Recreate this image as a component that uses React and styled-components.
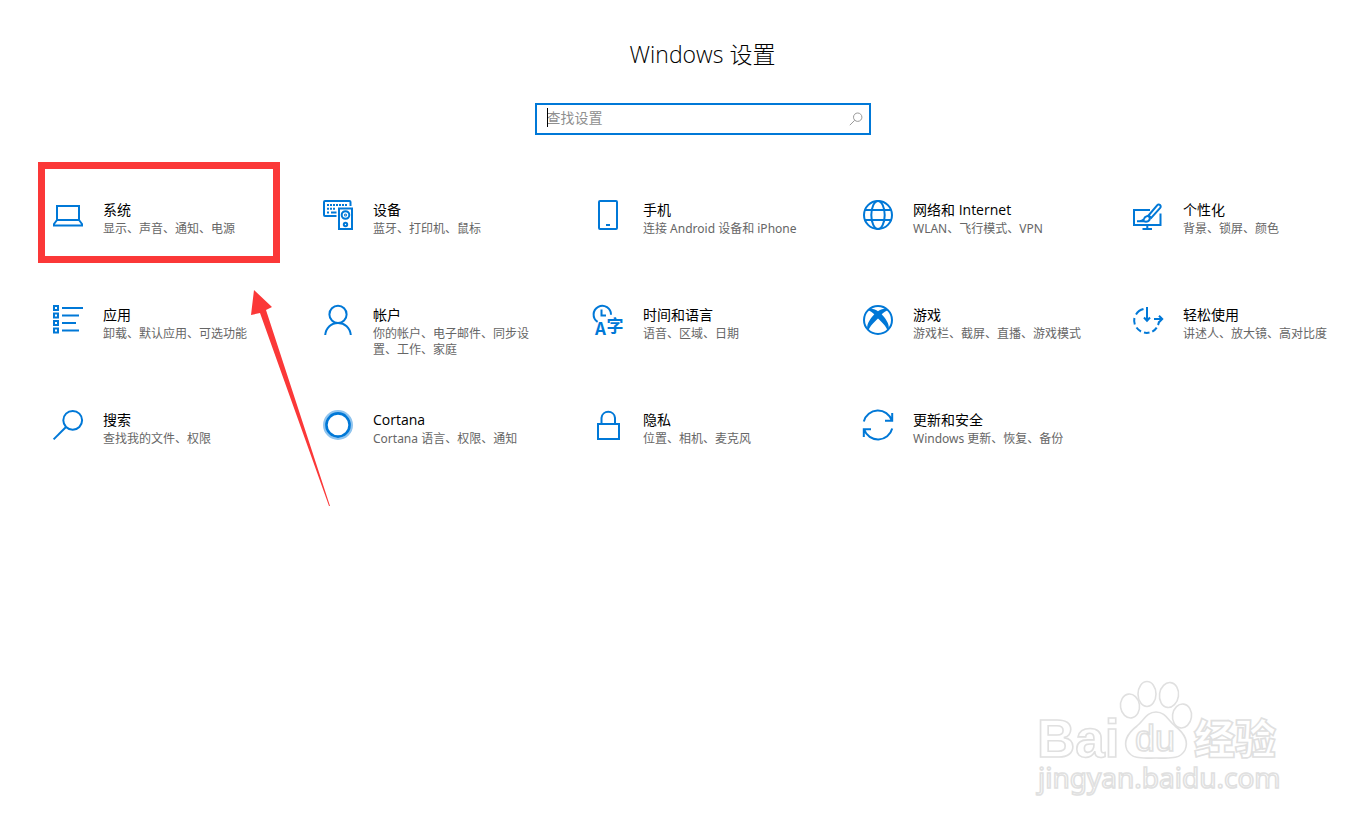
import React from "react";
import styled, { createGlobalStyle } from "styled-components";

const BLUE = "#0078d7";
const RED = "#fb3838";

const IconText = styled.text`
  fill: ${BLUE};
  stroke: none;
  font-family: "Noto Sans CJK SC", sans-serif;
  font-size: ${({ $size }) => $size}px;
  font-weight: 700;
`;

const icons = {
  system: (
    <>
      <rect x="4" y="6" width="22" height="14" />
      <path d="M4 20L1 24V25.5H29V24L26 20" />
    </>
  ),
  devices: (
    <>
      <path d="M13.5 16H2A1 1 0 0 1 1 15V2A1 1 0 0 1 2 1H26.5A1 1 0 0 1 27.5 2V6" />
      <path d="M4 5H25M4 8.7H13" strokeDasharray="2 1" />
      <path d="M4 12.4H6M8 12.4H13.5" />
      <rect x="16" y="8.5" width="13" height="20.5" />
      <circle cx="22.5" cy="15" r="3.8" />
      <circle cx="22.5" cy="15" r="0.5" />
      <circle cx="22.5" cy="24.5" r="1.7" />
    </>
  ),
  phone: (
    <>
      <rect x="6" y="1" width="18" height="28" rx="1" />
      <path d="M13 25H17" />
    </>
  ),
  network: (
    <>
      <circle cx="15" cy="15" r="14" />
      <ellipse cx="15" cy="15" rx="6.7" ry="14" />
      <path d="M2 10H28M2 20H28" />
    </>
  ),
  personalization: (
    <>
      <path d="M17 10H1V25H27.5V13.5" />
      <path d="M14.3 25V29M9.5 29H19" />
      <path d="M15.5 15.5L24.3 5.2A1.9 1.9 0 0 1 27.2 7.8L18.2 17.8Z" />
      <path d="M4 21.3C8 21.2 10.5 20.5 11.3 18.3C12 15.8 15.6 15.3 16.7 17.6C17.5 20.8 14 22.3 11 21.3Z" />
    </>
  ),
  apps: (
    <>
      <path d="M1 1H5V5H1ZM1 8.5H5V12.5H1ZM1 16H5V20H1ZM1 23.5H5V27.5H1Z" />
      <path d="M9 3H30M9 10.5H26M9 18H23M9 25.5H26" />
    </>
  ),
  accounts: (
    <>
      <circle cx="15" cy="9.4" r="8.6" />
      <path d="M2.2 30C3 22.6 8.2 18 15 18S27 22.6 27.8 30" />
    </>
  ),
  language: (
    <>
      <path d="M4.6 16.8A8.7 8.7 0 1 1 18 9.8" />
      <path d="M8.5 4.5V10.4H13" />
      <IconText x="2" y="30" $size={17}>A</IconText>
      <IconText x="13.5" y="26.5" $size={17}>字</IconText>
    </>
  ),
  gaming: (
    <>
      <circle cx="15" cy="15" r="14" />
      <path
        d="M6 4.2C9 3.2 12.5 4.5 15 6.3C17.5 4.5 21 3.2 24 4.2L25.5 5.5C23.5 5.3 20.5 7.5 18.7 9.3C22 13 26.5 18.5 25.8 24L24.5 25.8C23.5 21.5 18.5 16.8 15 13.6C11.5 16.8 6.5 21.5 5.5 25.8L4.2 24C3.5 18.5 8 13 11.3 9.3C9.5 7.5 6.5 5.3 4.5 5.5Z"
        fill={BLUE}
        stroke="none"
      />
    </>
  ),
  ease: (
    <>
      <path d="M3 9.5A12 12 0 0 1 10.5 4M1.4 13A12.5 12.5 0 0 0 1.8 19.5M3.5 22.5A12.5 12.5 0 0 0 8 26.5M11 27.6A12.5 12.5 0 0 0 16.5 27.6M19.3 26.6A12.5 12.5 0 0 0 23.7 22.6M25 20A12.5 12.5 0 0 0 26 16.5" />
      <path d="M14 2V14M21 14H29M11 12.5L14 15.7L17 12.5M26 10.8L29.2 14L26 17.2" />
    </>
  ),
  search: (
    <>
      <circle cx="19.7" cy="10.3" r="9.4" />
      <path d="M13 17L0.6 29.4" />
    </>
  ),
  cortana: (
    <>
      <circle cx="15" cy="15" r="13.8" stroke="#90c4ee" strokeWidth="2.4" />
      <circle cx="15" cy="15" r="11.6" strokeWidth="2.6" />
    </>
  ),
  privacy: (
    <>
      <rect x="5" y="14" width="21" height="15" />
      <path d="M8.5 14V7.8A6.8 6.8 0 0 1 22 7.8V14" />
    </>
  ),
  update: (
    <>
      <path d="M0.8 11.5A14.6 14.6 0 0 1 28.8 10.5M29.2 3V10.8H22" />
      <path d="M29.2 18.5A14.6 14.6 0 0 1 1.2 19.5M0.8 27V19.2H8" />
    </>
  ),
};

const categories = [
  { id: "system", title: "系统", text: "显示、声音、通知、电源", marked: true },
  { id: "devices", title: "设备", text: "蓝牙、打印机、鼠标" },
  { id: "phone", title: "手机", text: "连接 Android 设备和 iPhone" },
  { id: "network", title: "网络和 Internet", text: "WLAN、飞行模式、VPN" },
  { id: "personalization", title: "个性化", text: "背景、锁屏、颜色" },
  { id: "apps", title: "应用", text: "卸载、默认应用、可选功能" },
  { id: "accounts", title: "帐户", text: "你的帐户、电子邮件、同步设置、工作、家庭" },
  { id: "language", title: "时间和语言", text: "语音、区域、日期" },
  { id: "gaming", title: "游戏", text: "游戏栏、截屏、直播、游戏模式" },
  { id: "ease", title: "轻松使用", text: "讲述人、放大镜、高对比度" },
  { id: "search", title: "搜索", text: "查找我的文件、权限" },
  { id: "cortana", title: "Cortana", text: "Cortana 语言、权限、通知" },
  { id: "privacy", title: "隐私", text: "位置、相机、麦克风" },
  { id: "update", title: "更新和安全", text: "Windows 更新、恢复、备份" },
];

export default function App() {
  return (
    <>
      <GlobalStyle />
      <Page>
        <Title>Windows 设置</Title>
        <SearchBox>
          <SearchInput type="text" placeholder="查找设置" aria-label="查找设置" />
          <Caret />
          <SearchButton type="button" aria-label="搜索">
            <svg width="14" height="14" viewBox="0 0 14 14" fill="none" stroke="#999">
              <circle cx="8.7" cy="5.2" r="4.2" />
              <path d="M5.7 8.3L0.8 13.2" />
            </svg>
          </SearchButton>
        </SearchBox>
        <Grid>
          {categories.map((item) => (
            <Tile key={item.id} href={`#${item.id}`}>
              <Icon viewBox="0 0 30 30">{icons[item.id]}</Icon>
              <div>
                <TileTitle>{item.title}</TileTitle>
                <TileText>{item.text}</TileText>
              </div>
              {item.marked && <Frame />}
              {item.marked && (
                <Arrow viewBox="0 0 80 218">
                  <path d="M4 0L22 17L16 20L80 216L79 216L10 23L1 25Z" fill={RED} />
                </Arrow>
              )}
            </Tile>
          ))}
        </Grid>
        <Watermark />
      </Page>
    </>
  );
}

function Watermark() {
  return (
    <Logo viewBox="0 0 260 130">
      <ellipse cx="110" cy="36" rx="9.5" ry="12" transform="rotate(-8 110 36)" />
      <ellipse cx="127" cy="24" rx="9" ry="12.5" />
      <ellipse cx="149" cy="25" rx="9.5" ry="12.5" transform="rotate(8 149 25)" />
      <ellipse cx="162" cy="46" rx="9.5" ry="12" transform="rotate(8 162 46)" />
      <LogoText x="17" y="87" $size={53}>Bai</LogoText>
      <path d="M136 42C145 42 148 50 155 56C164 63 169 71 165 80C160 90 148 88 136 88S112 90 107 80C103 71 108 63 117 56C124 50 127 42 136 42Z" />
      <LogoText x="115" y="81" $size={36} $weight={400}>du</LogoText>
      <LogoText x="174" y="84" $size={41} $weight={900}>经验</LogoText>
      <LogoText x="18" y="118" $size={28} $weight={400} $family="Noto Sans">
        jingyan.baidu.com
      </LogoText>
    </Logo>
  );
}

const GlobalStyle = createGlobalStyle`
  * {
    box-sizing: border-box;
  }
  body {
    margin: 0;
    background: #fff;
    color: #000;
    font-family: "Open Sans", "Noto Sans CJK SC", sans-serif;
    overflow-x: hidden;
  }
`;

const Page = styled.main`
  position: relative;
  display: flex;
  flex-direction: column;
  align-items: center;
  min-height: 100vh;
  padding: 38px 0 0 53px;
`;

const Title = styled.h1`
  margin: 0 0 33px;
  font-size: 23px;
  line-height: 32px;
  font-weight: 300;
`;

const SearchBox = styled.div`
  position: relative;
  display: flex;
  align-items: center;
  width: 336px;
  height: 32px;
  margin-bottom: 65px;
  border: 2px solid ${BLUE};
`;

const SearchInput = styled.input`
  flex: 1;
  min-width: 0;
  height: 28px;
  padding: 0 0 4px 10px;
  border: 0;
  outline: 0;
  background: none;
  font-family: inherit;
  font-size: 14px;
  &::placeholder {
    color: #8f8f8f;
  }
`;

const Caret = styled.span`
  position: absolute;
  left: 10px;
  top: 3px;
  width: 1px;
  height: 19px;
  background: #000;
`;

const SearchButton = styled.button`
  display: flex;
  padding: 0 6px;
  border: 0;
  background: none;
`;

const Grid = styled.nav`
  display: grid;
  grid-template-columns: repeat(5, minmax(0, 1fr));
  grid-auto-rows: minmax(105px, auto);
  column-gap: 51px;
  width: 100%;
`;

const Tile = styled.a`
  position: relative;
  display: flex;
  align-items: flex-start;
  gap: 20px;
  color: inherit;
  text-decoration: none;
`;

const Icon = styled.svg`
  flex: none;
  width: 30px;
  height: 30px;
  overflow: visible;
  fill: none;
  stroke: ${BLUE};
  stroke-width: 2;
`;

const TileTitle = styled.div`
  font-size: 14px;
  line-height: 20px;
`;

const TileText = styled.div`
  margin-top: 1px;
  color: #666;
  font-family: "Noto Sans", "Noto Sans CJK SC", sans-serif;
  font-size: 12px;
  line-height: 16px;
`;

const Frame = styled.span`
  position: absolute;
  left: -15px;
  top: -38px;
  width: 242px;
  height: 101px;
  border: 7px solid ${RED};
`;

const Arrow = styled.svg`
  position: absolute;
  left: 197px;
  top: 90px;
  width: 80px;
  height: 218px;
  z-index: 1;
  pointer-events: none;
`;

const Logo = styled.svg`
  position: absolute;
  right: 72px;
  bottom: 25px;
  width: 260px;
  height: 130px;
  fill: #fff;
  stroke: #e0e0e0;
  stroke-width: 1.6;
`;

const LogoText = styled.text`
  font-family: ${({ $family = "Liberation Sans" }) => `"${$family}"`}, "Noto Sans CJK SC", sans-serif;
  font-size: ${({ $size }) => $size}px;
  font-weight: ${({ $weight = 700 }) => $weight};
`;
